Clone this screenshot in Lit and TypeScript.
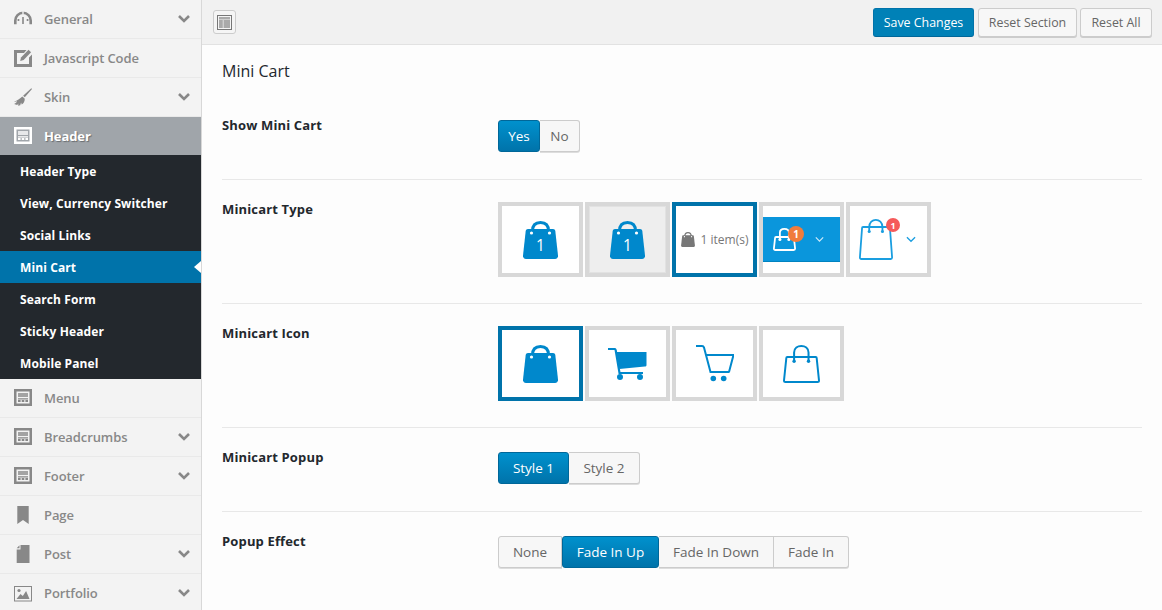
import { LitElement, html, css, svg } from 'lit';
import { customElement } from 'lit/decorators.js';

const FONT = css([`"Open Sans", "Liberation Sans", sans-serif`] as unknown as TemplateStringsArray);

const layoutIcon = svg`<path fill-rule="evenodd" d="M0 0h18v17H0zM2.500 2.500v12h13v-12z"/><path d="M4 4h10v4H4z" opacity=".75"/><path d="M4 9.200h10v1.200H4zM4 11h2.600v2H4zM7.700 11h2.600v2H7.700zM11.400 11H14v2h-2.600z"/>`;

const sideIcons: Record<string, unknown> = {
    gauge: svg`<path d="M1.300 14.200V10.500a7.700 7.700 0 0 1 15.400 0v3.700" fill="none" stroke="currentColor" stroke-width="2.600"/><path d="M8.300 0h1.400v4H8.300z" fill="#f3f3f3"/><path d="M8.200 7h1.600v7H8.200zM3.600 9h1.700v2H3.600zM12.700 9h1.700v2h-1.700z"/>`,
    edit: svg`<path d="M0 1h12.500l-2.500 3H3v11h12V8.500l3-3V18H0z"/><path d="M7 8.500 14.500.8l2.600 2.400-7.500 7.800-3.400 1z"/>`,
    brush: svg`<path d="M17.300.2 18 1l-7.200 8.300-1.700-1.500z"/><path d="M8.300 8.500l2.300 2c.5 2.100-.5 3.800-1.800 5.300l-1.100.8-.6-2-.9 2.700-2.100.4.300-2.300-1.200 1.600L.100 16c1.200-.600 2.300-1.200 3-2.800-1 .4-2 .5-3 .4 3-1 6-2.800 8.200-5.100z"/>`,
    layout: layoutIcon,
    page: svg`<path d="M3.300 0h11.400v18l-5.700-4-5.700 4z"/>`,
    post: svg`<path d="M6.500 0h9v18H2.700V4.500H6.500zM2.700 3.300 5.500.2v3.100z"/>`,
    image: svg`<path fill-rule="evenodd" d="M0 2h18v15.500H0zM1 3v13.500h16V3z"/><path d="M2.500 15l4-5 2.300 2 3.300-5 3.400 8z"/><circle cx="5" cy="6.500" r="1.600"/>`,
};

type NavItem = { label: string; icon: string; more?: boolean; open?: boolean };

const NAV_TOP: NavItem[] = [
    { label: 'General', icon: 'gauge', more: true },
    { label: 'Javascript Code', icon: 'edit' },
    { label: 'Skin', icon: 'brush', more: true },
    { label: 'Header', icon: 'layout', open: true },
];

const NAV_BOTTOM: NavItem[] = [
    { label: 'Menu', icon: 'layout' },
    { label: 'Breadcrumbs', icon: 'layout', more: true },
    { label: 'Footer', icon: 'layout', more: true },
    { label: 'Page', icon: 'page' },
    { label: 'Post', icon: 'post', more: true },
    { label: 'Portfolio', icon: 'image', more: true },
];

const SUB_ITEMS = [
    'Header Type',
    'View, Currency Switcher',
    'Social Links',
    'Mini Cart',
    'Search Form',
    'Sticky Header',
    'Mobile Panel',
];

// solid bag with optional number, used in the first two thumbs and the icon row
function solidBag(w: number, h: number, fill: string, count?: string) {
    return html`<svg width=${w} height=${h} viewBox="0 0 35 38">
        <path
            d="M5 8h25c1.300 0 2.100.7 2.300 2L35 34.500c.200 2-1 3.500-3 3.500H3c-2 0-3.200-1.500-3-3.500L2.700 10C2.900 8.700 3.700 8 5 8z"
            fill=${fill}
        />
        <path d="M9.500 10C9.500 4 13 1.500 17.500 1.500S25.500 4 25.500 10" fill="none" stroke=${fill} stroke-width="3" />
        <circle cx="8.500" cy="12" r="1.600" fill="#fff" />
        <circle cx="26.500" cy="12" r="1.600" fill="#fff" />
        ${count
            ? svg`<text x="17.500" y="29.500" text-anchor="middle" font-size="15.500" fill="#fff" font-family="Open Sans, sans-serif">${count}</text>`
            : ''}
    </svg>`;
}

// outline bag in real pixels, top is where the body starts as a share of the height
function outlineBag(w: number, h: number, color: string, sw: number, top: number) {
    const y = Math.round(h * top);
    const inset = w * 0.09;
    const left = w * 0.3;
    const right = w * 0.69;
    const dot = y + h * 0.11;
    // cubic peak sits at a quarter of the start plus three quarters of the control
    const start = h * 0.2;
    const ctrl = (sw / 2 - start * 0.25) / 0.75;
    return html`<svg width=${w} height=${h} viewBox="0 0 ${w} ${h}" fill="none" stroke=${color} stroke-width=${sw}>
        <path
            d="M${inset + 1} ${y}H${w - inset - 1}q1 0 1 1L${w - sw / 2} ${h - 2.500}q0 1.500-1.500 1.500H${sw / 2 + 1.500}q-1.500 0-1.500-1.500L${inset} ${y + 1}q0-1 1-1z"
            stroke-linejoin="round"
        />
        <path d="M${left} ${dot}V${start}C${left} ${ctrl} ${right} ${ctrl} ${right} ${start}V${dot}" />
        <circle cx=${left} cy=${dot} r=${sw * 0.85} fill=${color} stroke="none" />
        <circle cx=${right} cy=${dot} r=${sw * 0.85} fill=${color} stroke="none" />
    </svg>`;
}

function chevron(color: string, w = 11) {
    return html`<svg width=${w} height="7" viewBox="0 0 11 7" fill="none" stroke=${color} stroke-width="1.400">
        <path d="M1 1l4.500 4.500L10 1" />
    </svg>`;
}

@customElement('side-nav-row')
class SideNavRow extends LitElement {
    static properties = {
        label: { type: String },
        icon: { type: String },
        more: { type: Boolean },
        open: { type: Boolean, reflect: true },
    };

    declare label: string;
    declare icon: string;
    declare more: boolean;
    declare open: boolean;

    static styles = css`
        :host {
            display: flex;
            align-items: center;
            height: 38px;
            padding-left: 14px;
            padding-right: 11px;
            border-bottom: 1px solid #e9e9e9;
            background: #f3f3f3;
            color: #888;
            font-size: 13px;
            font-weight: 600;
            letter-spacing: -0.1px;
        }
        :host([open]) {
            border-bottom: 0;
            background: #a0a5aa;
            color: #fff;
            font-weight: 700;
            text-shadow: 1px 1px 1px rgba(0, 0, 0, 0.35);
        }
        .icon {
            width: 18px;
            height: 18px;
            fill: currentColor;
            flex: none;
        }
        .label {
            margin-left: 12px;
            flex: 1;
            white-space: nowrap;
        }
    `;

    render() {
        return html`<svg class="icon" viewBox="0 0 18 18">${sideIcons[this.icon]}</svg>
            <span class="label">${this.label}</span>
            ${this.more
                ? html`<svg width="12" height="8" viewBox="0 0 12 8" fill="none" stroke="#888" stroke-width="2.600">
                      <path d="M1 1l5 5 5-5" />
                  </svg>`
                : ''}`;
    }
}

@customElement('option-group')
class OptionGroup extends LitElement {
    static properties = {
        options: { type: Array },
        selected: { type: String },
    };

    declare options: { label: string; width: number }[];
    declare selected: string;

    static styles = css`
        :host {
            display: flex;
            margin-top: 4px;
        }
        button {
            height: 32px;
            padding: 0;
            border: 1px solid #ccc;
            border-left-width: 0;
            background: #f7f7f7;
            color: #666;
            font-family: ${FONT};
            font-size: 13.500px;
            box-shadow: 0 1px 0 #ddd;
            white-space: nowrap;
        }
        button:first-child {
            border-left-width: 1px;
            border-radius: 3px 0 0 3px;
        }
        button:last-child {
            border-radius: 0 3px 3px 0;
        }
        button.on {
            background: linear-gradient(#0091cd, #0073aa);
            border: 1px solid #006799;
            border-radius: 3px;
            color: #fff;
            box-shadow: none;
        }
    `;

    render() {
        return this.options.map(
            (o) =>
                html`<button class=${o.label === this.selected ? 'on' : ''} style="width:${o.width}px">
                    ${o.label}
                </button>`,
        );
    }
}

@customElement('app-root')
export class AppRoot extends LitElement {
    static styles = css`
        :host {
            display: flex;
            width: 1162px;
            height: 610px;
            overflow: hidden;
            background: #fdfdfd;
            font-family: ${FONT};
            color: #23282d;
        }
        .sidebar {
            width: 201px;
            flex: none;
            border-right: 1px solid #d8d8d8;
            background: #f3f3f3;
            overflow: hidden;
        }
        .sub {
            background: #23282d;
        }
        .sub div {
            position: relative;
            height: 32px;
            line-height: 34px;
            padding-left: 20px;
            color: #fff;
            font-size: 12px;
            font-weight: 700;
            letter-spacing: 0.1px;
        }
        .sub div.current {
            background: #0073aa;
        }
        .sub div.current::after {
            content: '';
            position: absolute;
            right: 0;
            top: 10px;
            border: 6px solid transparent;
            border-left-width: 0;
            border-right: 7px solid #fff;
        }
        .main {
            flex: 1;
            min-width: 0;
        }
        .topbar {
            display: flex;
            align-items: center;
            height: 44px;
            padding: 0 10px 0 11px;
            background: #f1f1f1;
            border-bottom: 1px solid #e2e2e2;
        }
        .toggle {
            display: flex;
            align-items: center;
            justify-content: center;
            width: 23px;
            height: 24px;
            margin-right: auto;
            border: 1px solid #ccc;
            border-radius: 3px;
            box-sizing: border-box;
            background: #f5f5f5;
        }
        .btn {
            height: 29px;
            margin-left: 3px;
            padding: 0;
            border: 1px solid #ccc;
            border-radius: 3px;
            background: #f7f7f7;
            color: #666;
            box-shadow: 0 1px 0 #ccc;
            font: 12.400px ${FONT};
        }
        .btn.primary {
            margin-right: 1px;
            background: #0081b7;
            border-color: #0073aa;
            border-bottom-color: #006799;
            color: #fff;
            box-shadow: none;
        }
        .content {
            padding: 0 20px;
        }
        h3 {
            margin: 0;
            padding: 16px 0 15px;
            font-size: 16px;
            line-height: 20px;
            font-weight: 400;
        }
        .row {
            display: grid;
            grid-template-columns: 276px 1fr;
            padding: 20px 0 27px;
            border-bottom: 1px solid #e8e8e8;
        }
        .row.thumbs {
            padding-bottom: 26px;
        }
        .row:last-child {
            border-bottom: 0;
        }
        .row > label {
            font-size: 13px;
            font-weight: 700;
            line-height: 18px;
            letter-spacing: 0.15px;
        }
        .thumb-list {
            display: flex;
            gap: 2px;
            margin-top: 2px;
        }
        .thumb {
            position: relative;
            display: flex;
            align-items: center;
            justify-content: center;
            width: 85px;
            height: 75px;
            box-sizing: border-box;
            border: 4px solid #d8d8d8;
            background: #fff;
        }
        .thumb.on {
            border-color: #0073aa;
        }
        .thumb.boxed {
            background: #eee;
            box-shadow: inset 0 0 0 1px #e2e2e2;
        }
        .item-count {
            display: flex;
            align-items: center;
            gap: 6px;
            color: #777;
            font-size: 12px;
            white-space: nowrap;
        }
        .band {
            display: flex;
            align-items: center;
            width: 77px;
            height: 45px;
            padding-left: 10px;
            box-sizing: border-box;
            background: #0a96dc;
            border-bottom: 1px solid #0083c0;
        }
        .badge-wrap {
            position: relative;
            display: flex;
        }
        .badge {
            position: absolute;
            border-radius: 50%;
            display: flex;
            align-items: center;
            justify-content: center;
            color: #fff;
            font-weight: 700;
        }
        .badge.orange {
            right: -8px;
            top: -2px;
            width: 16px;
            height: 16px;
            background: #f07c3c;
            font-size: 10px;
        }
        .badge.red {
            right: -7px;
            top: -1px;
            width: 14px;
            height: 14px;
            background: #f55a5a;
            font-size: 9px;
        }
        .band .chev {
            margin-left: 19px;
            display: flex;
        }
        .thumb.plain {
            padding-right: 2px;
        }
        .plain .chev {
            margin-left: 13px;
            display: flex;
        }
    `;

    private renderSide() {
        return html`<nav class="sidebar">
            ${NAV_TOP.map(
                (n) =>
                    html`<side-nav-row
                        .label=${n.label}
                        .icon=${n.icon}
                        .more=${!!n.more}
                        .open=${!!n.open}
                    ></side-nav-row>`,
            )}
            <div class="sub">
                ${SUB_ITEMS.map((s) => html`<div class=${s === 'Mini Cart' ? 'current' : ''}>${s}</div>`)}
            </div>
            ${NAV_BOTTOM.map(
                (n) => html`<side-nav-row .label=${n.label} .icon=${n.icon} .more=${!!n.more}></side-nav-row>`,
            )}
        </nav>`;
    }

    private renderTypes() {
        return html`<div class="thumb-list">
            <div class="thumb">${solidBag(35, 38, '#0088cc', '1')}</div>
            <div class="thumb boxed">${solidBag(35, 38, '#0088cc', '1')}</div>
            <div class="thumb on">
                <span class="item-count">${solidBag(14, 15, '#777')}1 item(s)</span>
            </div>
            <div class="thumb">
                <div class="band">
                    <span class="badge-wrap">
                        ${outlineBag(23, 23, '#fff', 1.8, 0.38)}
                        <span class="badge orange">1</span>
                    </span>
                    <span class="chev">${chevron('#cfeafa', 9)}</span>
                </div>
            </div>
            <div class="thumb plain">
                <span class="badge-wrap">
                    ${outlineBag(34, 41, '#1a9ee0', 1.8, 0.2)}
                    <span class="badge red">1</span>
                </span>
                <span class="chev">${chevron('#1a9ee0', 10)}</span>
            </div>
        </div>`;
    }

    private renderIcons() {
        const blue = '#0088cc';
        return html`<div class="thumb-list">
            <div class="thumb on">${solidBag(35, 38, blue)}</div>
            <div class="thumb">
                <svg width="39" height="32" viewBox="0 0 39 32">
                    <path d="M0 1h6.500c.8 0 1 .4 1.200 1.200L11.500 25H35" fill="none" stroke=${blue} stroke-width="2.200" />
                    <path d="M8.300 4H38.500v13c0 1-.7 1.500-1.700 1.600L11.300 21z" fill=${blue} />
                    <circle cx="12" cy="29" r="3" fill=${blue} />
                    <circle cx="32" cy="29" r="3" fill=${blue} />
                </svg>
            </div>
            <div class="thumb">
                <svg width="38" height="37" viewBox="0 0 38 37" fill="none" stroke=${blue} stroke-width="2">
                    <path d="M0 1h6c1 0 1.700.5 2 1.500L14.500 27h19" />
                    <path d="M10 10h27.500l-4.500 17" stroke-linejoin="round" />
                    <circle cx="17.300" cy="33.500" r="2.800" fill=${blue} stroke="none" />
                    <circle cx="27.700" cy="33.500" r="2.800" fill=${blue} stroke="none" />
                </svg>
            </div>
            <div class="thumb">${outlineBag(37, 38, blue, 2, 0.31)}</div>
        </div>`;
    }

    render() {
        return html`${this.renderSide()}
            <div class="main">
                <div class="topbar">
                    <div class="toggle">
                        <svg width="15" height="15" viewBox="0 0 15 15">
                            <path fill="#777" fill-rule="evenodd" d="M0 0h15v15H0zM1 1v13h13V1z" />
                            <path fill="#aaa" d="M2 2h11v2.500H2zM2 5h3.800v8H2zM6.500 5H13v8H6.500z" />
                        </svg>
                    </div>
                    <button class="btn primary" style="width:101px">Save Changes</button>
                    <button class="btn" style="width:99px">Reset Section</button>
                    <button class="btn" style="width:72px">Reset All</button>
                </div>
                <div class="content">
                    <h3>Mini Cart</h3>
                    <div class="row">
                        <label>Show Mini Cart</label>
                        <option-group
                            .options=${[
                                { label: 'Yes', width: 42 },
                                { label: 'No', width: 40 },
                            ]}
                            selected="Yes"
                        ></option-group>
                    </div>
                    <div class="row thumbs">
                        <label>Minicart Type</label>
                        ${this.renderTypes()}
                    </div>
                    <div class="row thumbs">
                        <label>Minicart Icon</label>
                        ${this.renderIcons()}
                    </div>
                    <div class="row">
                        <label>Minicart Popup</label>
                        <option-group
                            .options=${[
                                { label: 'Style 1', width: 71 },
                                { label: 'Style 2', width: 71 },
                            ]}
                            selected="Style 1"
                        ></option-group>
                    </div>
                    <div class="row">
                        <label>Popup Effect</label>
                        <option-group
                            .options=${[
                                { label: 'None', width: 64 },
                                { label: 'Fade In Up', width: 97 },
                                { label: 'Fade In Down', width: 115 },
                                { label: 'Fade In', width: 75 },
                            ]}
                            selected="Fade In Up"
                        ></option-group>
                    </div>
                </div>
            </div>`;
    }
}
